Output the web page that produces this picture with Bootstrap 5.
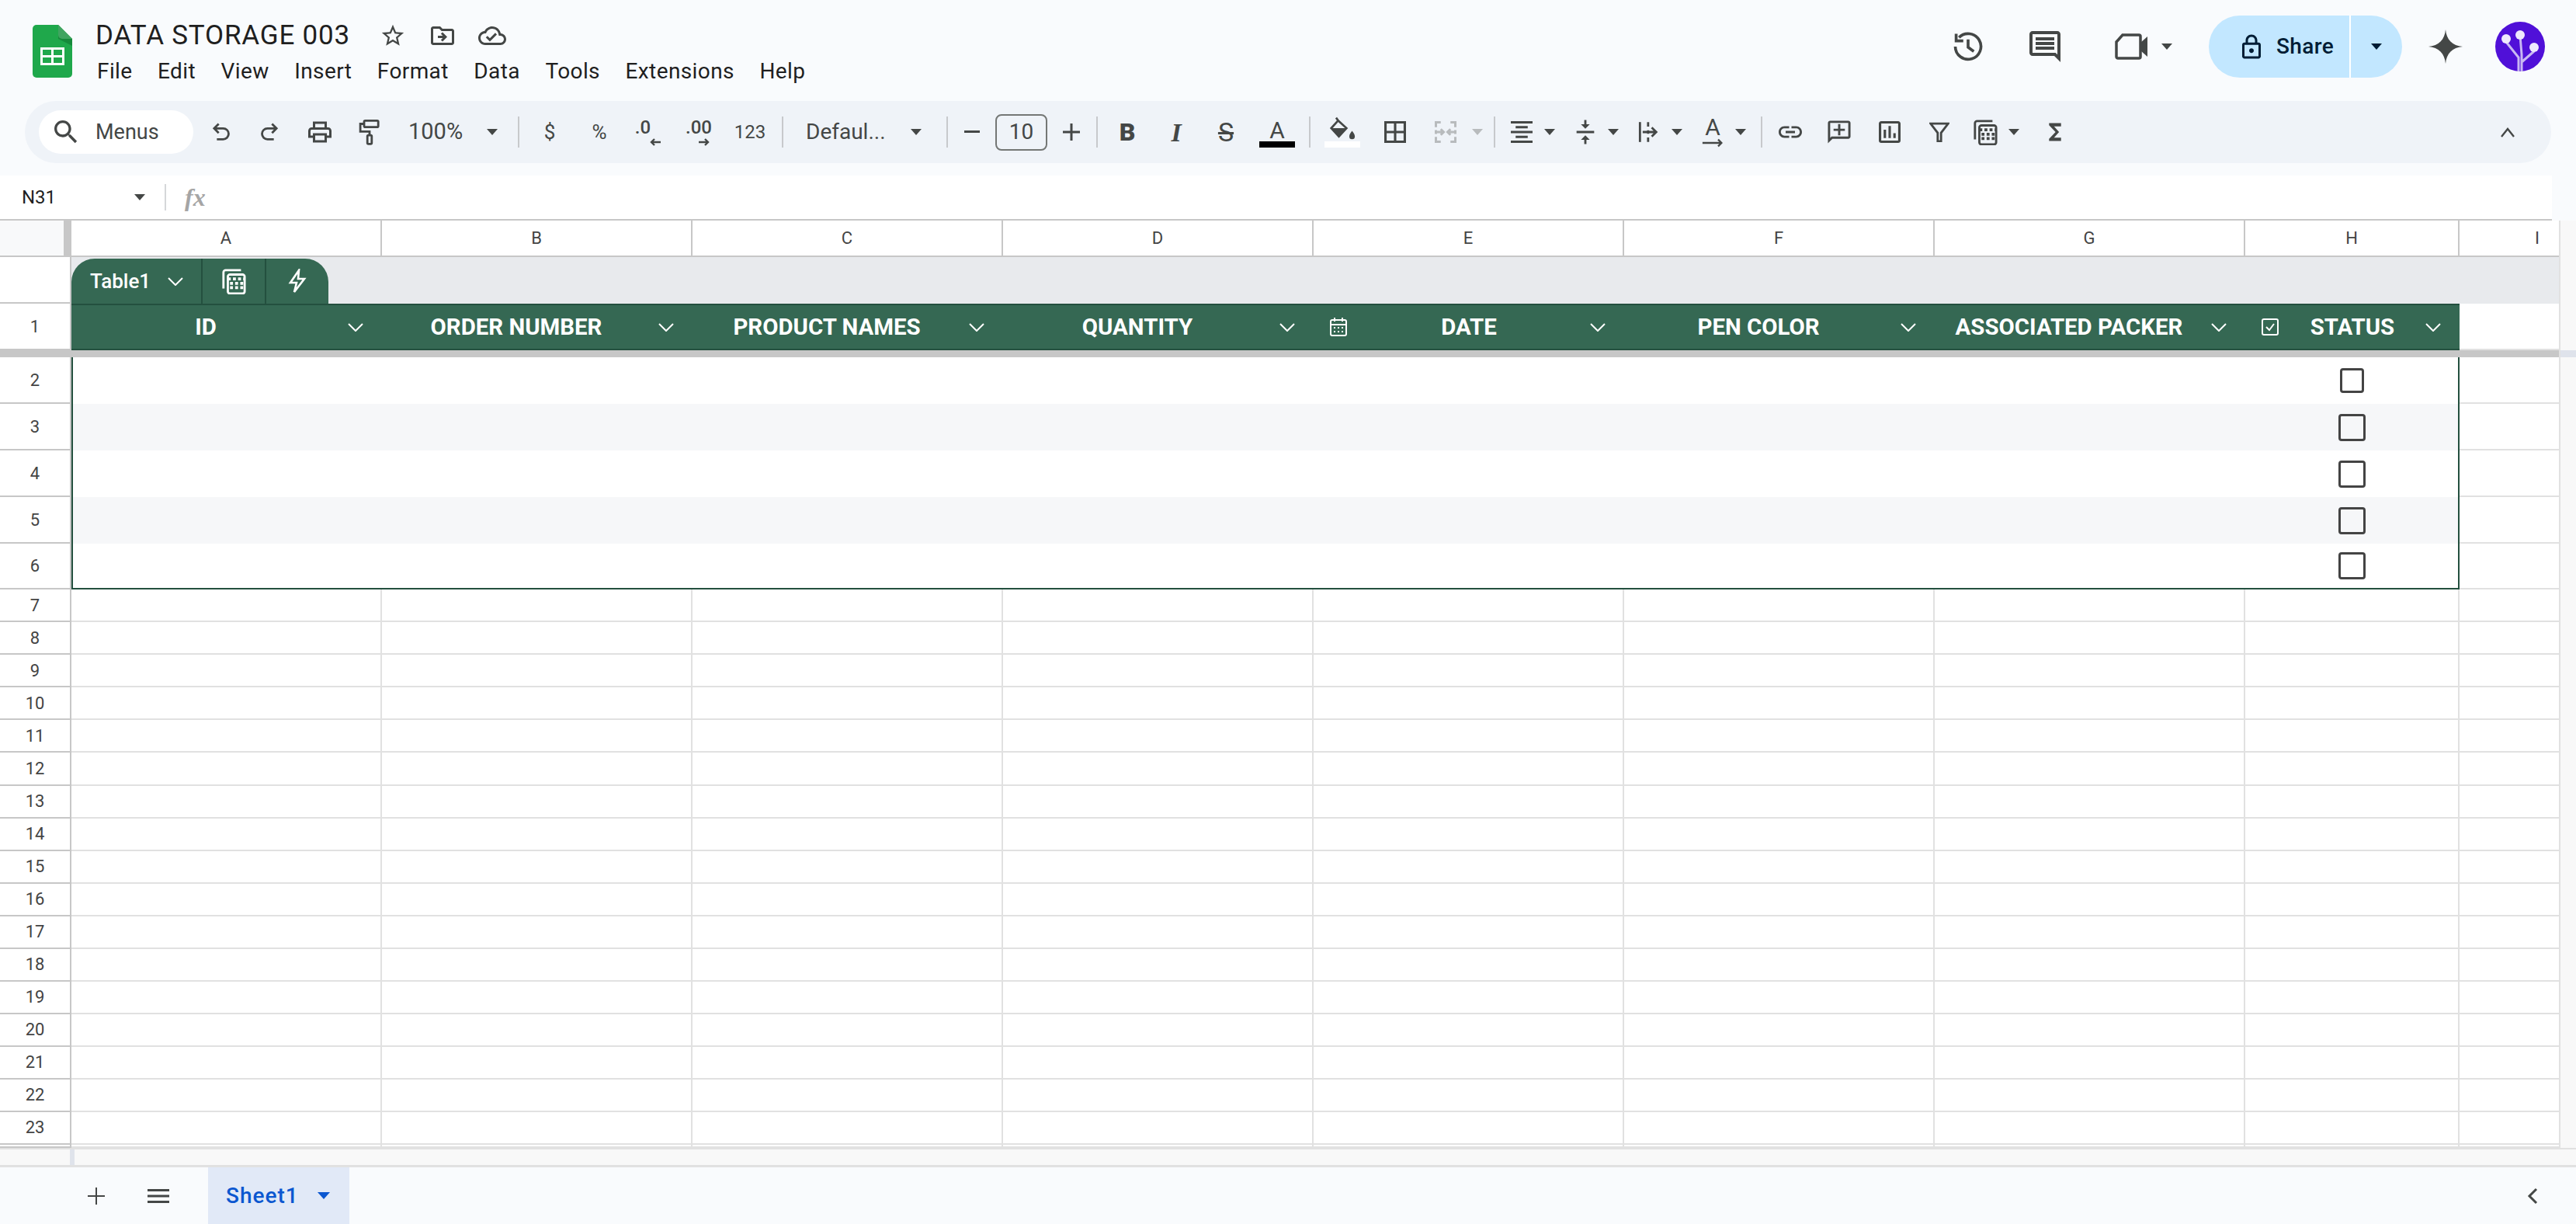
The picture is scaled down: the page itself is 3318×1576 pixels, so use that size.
<!DOCTYPE html>
<html lang="en">
<head>
<meta charset="utf-8">
<title>DATA STORAGE 003</title>
<link rel="stylesheet" href="https://cdn.jsdelivr.net/npm/bootstrap@5.3.0/dist/css/bootstrap.min.css">
<style>
html,body{height:100%}
body{width:3318px;height:1576px;overflow:hidden;background:#f9fbfd;font-family:Roboto,"Liberation Sans",sans-serif;color:#1f1f1f}
svg{display:block;flex:none}
.ic{fill:#444746}
.st{fill:none;stroke:#444746;stroke-width:2}
.tbar{height:130px}
.logo-box{margin:32px 0 0 42px;width:51px;height:68px}
.tcol{margin-left:30px}
.ttl-row{height:47px;margin-top:22px}
.ttl{font-size:35px;line-height:47px;letter-spacing:.8px;margin-right:23px;color:#1f1f1f}
.ttl-ic{width:64px}
.menu-row{gap:32.5px;font-size:28px;line-height:40px;letter-spacing:.4px;margin-top:3px;margin-left:2px}
.right-g{margin:20px 40px 0 0;height:80px}
.r-ic{width:64px}
.g-com{margin-left:35px}
.g-vid{margin-left:58px}
.g-shr{margin-left:47px}
.g-spk{margin-left:34px}
.g-av{margin-left:42px}
.sharebtn{width:249px;height:80px;background:#c2e7ff;border-radius:40px;color:#001d35;overflow:hidden}
.share-l{width:181px;padding-left:43px;gap:20px;font-size:28px;font-weight:500;letter-spacing:.4px}
.share-d{width:2px;height:80px;background:#fff}
.share-r{width:66px;padding-right:0}
.tri{width:0;height:0;border-left:7px solid transparent;border-right:7px solid transparent;border-top:8px solid #444746;flex:none}
.tri-navy{border-top-color:#001d35}
.tri-dis{border-top-color:#b8bbbd}
.tri-blue{border-top-color:#0b57d0;border-left-width:8px;border-right-width:8px;border-top-width:9px}
.tools{height:80px;margin:0 32px;background:#eff3f8;border-radius:40px;padding-left:18px;width:3254px}
.pill{width:199px;height:56px;background:#fff;border-radius:28px;padding-left:20px;gap:23px;font-size:27px;color:#444746;margin-right:3px}
.tw{height:80px;display:flex;align-items:center;justify-content:center;flex:none;color:#444746}
.w48{width:48px}.w50{width:50px}.w58{width:58px}.w62{width:62px}.w64{width:64px}.w66{width:66px}.w68{width:68px}.w74{width:74px}
.tsep{width:2px;height:40px;background:#c7c9cc;margin:0 7px;flex:none}
.tzoom{width:152px;padding-left:18px;padding-right:19px;justify-content:space-between;font-size:29px}
.tfont{width:196px;padding-left:22px;padding-right:25px;justify-content:space-between;font-size:28px}
.tsize{width:67px;height:47px;border:2px solid #747775;border-radius:8px;font-size:28px;margin:0 6px;color:#444746}
.tsym{font-size:26px}
.t123{font-size:24px}
.tdec{font-size:24px;line-height:20px;font-weight:500;text-align:center;padding-top:2px}
.dec-a{margin-right:16px}
.dec-b{margin-left:16px;margin-top:4px}
.dec-c{margin-left:14px;margin-top:4px}
.tb-b{font-size:32px;font-weight:900}
.tb-i{font-size:34px;font-family:"Liberation Serif",serif;font-style:italic;font-weight:700}
.tb-s{font-size:34px;text-decoration:line-through}
.tcolor{flex-direction:column;justify-content:flex-start;padding-top:24px}
.tb-a{font-size:30px;line-height:28px}
.bar-k{width:46px;height:8px;background:#000}
.bar-w{width:46px;height:8px;background:#fff;margin-top:2px}
.tdrop{width:82px;padding-left:7px;justify-content:flex-start}
.ibox{width:40px;display:flex;justify-content:center;flex:none}
.tdrop .tri{margin-left:9px}
.tmerge{width:86px;padding-left:11px;justify-content:flex-start}
.tmerge .tri{margin-left:14px}
.tfunc{width:79px;padding-left:6px;justify-content:flex-start}
.tfunc .tri{margin-left:10px}
.tup{width:64px;margin-right:24px}
.fbar{height:58px;margin-top:16px;width:3287px;background:#fff;border-bottom:2px solid #c7c7c7}
.nbox{width:212px;padding-left:28px;padding-right:25px;font-size:24px;color:#1f1f1f}
.fsep{width:2px;height:34px;background:#d5d7d9}
.fxt{font-family:"Liberation Serif",serif;font-style:italic;font-size:32px;color:#a5a5a5;margin-left:24px;font-weight:700}
.sheet-wrap{height:1194px;overflow:hidden;background:#fff}
.gridt{table-layout:fixed;width:3296px;border-collapse:separate;border-spacing:0;flex:none}
.c-r{width:92px}.c-w{width:400px}.c-h{width:276px}.c-i{width:128px}
.gridt td,.gridt th{padding:0;font-weight:400;vertical-align:middle}
.col-r{height:47px;font-size:22px;color:#444;text-align:center;border-right:2px solid #c7c7c7;border-bottom:2px solid #c7c7c7;background:#fff}
.gridt th.col-i{border-right:0;padding-left:72px}
.corner{background:#f8f9fa;border-right:10px solid #c7c7c7}
.rh{font-size:22px;color:#444;text-align:center;border-right:2px solid #c7c7c7;border-bottom:2px solid #c7c7c7;background:#fff}
.h60{height:60px}.h59{height:59px}.h42{height:42px}.h4{height:4px}.h9{height:9px}
.zone{background:#e8eaed;vertical-align:bottom!important}
.chip{width:331px;height:58px;background:#356853;border-radius:30px 30px 0 0;color:#fff;overflow:hidden;margin-top:2px}
.chip-a{width:167px;padding-left:24px;gap:22px;font-size:26px;font-weight:500}
.chip-s{width:2px;background:#24503f;height:58px}
.chip-b{width:80px}
.hd{height:60px;background:#356853;border-top:2px solid #24503f;border-bottom:2px solid #24503f;color:#fff;font-size:29.4px;font-weight:700!important}
.hc{height:56px}
.hc-t{flex:1;text-align:center;white-space:nowrap}
.hc-r{width:54px;padding-left:10px;flex:none}
.hc-l{width:54px;padding-left:21px;flex:none}
.freeze{height:9px;background:#c7c7c7;line-height:0;font-size:0}
.ce{border-right:2px solid #e1e1e1;border-bottom:2px solid #e1e1e1;background:#fff}
.ce-last{border-bottom:2px solid #e1e1e1;border-right:0;background:#fff}
.tb-l{border-left:2px solid #24503f}
.tb-rr{border-right:2px solid #24503f}
.tb-bb{border-bottom:2px solid #24503f}
.band{background:#f6f7f9}
.plain{background:#fff}
.ck{text-align:center}
.sk-check.form-check-input{display:block;margin:0 auto;background-color:transparent;border:3px solid #444;border-radius:4px;width:35px;height:35px}
.sk-small.form-check-input{width:31px;height:32px}
.vscroll{width:22px;background:#f8f8f8;border-left:2px solid #e1e1e1}
.v-freeze{height:9px;margin-top:167px;background:#dfe3eb}
.hscroll{height:25px;background:#f8f8f8;border-top:2px solid #e1e1e1;border-bottom:3px solid #e1e1e1}
.hs-stub{width:6px;margin-left:90px;background:#dfe3eb}
.btm{height:73px}
.b-s{width:48px;height:73px}
.b-add{margin-left:100px}
.b-all{margin-left:32px}
.stab{width:182px;height:73px;margin-left:40px;background:#e1e9f7;color:#0b57d0;font-size:28px;font-weight:500;letter-spacing:1px;padding-left:23px;gap:24px}
.b-end{width:40px;height:73px;margin-right:36px}
</style>
</head>
<body class="d-flex flex-column">

<header class="tbar d-flex flex-none">
  <div class="logo-box flex-shrink-0">
    <svg width="51" height="68" viewBox="0 0 51 68"><path d="M5 0H33L51 18V63a5 5 0 0 1-5 5H5a5 5 0 0 1-5-5V5a5 5 0 0 1 5-5z" fill="#1fa84b"/><path d="M33 0L51 18V27L33 18z" fill="#168a3b"/><path d="M33 0V13a5 5 0 0 0 5 5H51z" fill="#8fd5a6" opacity=".35"/><path d="M10 29H41V52H10zM13 32v7h11v-7zm14 0v7h11v-7zM13 42v7h11v-7zm14 0v7h11v-7z" fill="#fff" fill-rule="evenodd"/></svg>
  </div>
  <div class="tcol">
    <div class="ttl-row d-flex align-items-center">
      <span class="ttl">DATA STORAGE 003</span>
      <span class="ttl-ic d-flex justify-content-center"><svg width="34" height="34" viewBox="0 0 24 24" class="ic"><path d="M22 9.24l-7.19-.62L12 2 9.19 8.63 2 9.24l5.46 4.73L5.82 21 12 17.27 18.18 21l-1.63-7.03L22 9.24zM12 15.4l-3.76 2.27 1-4.28-3.32-2.88 4.38-.38L12 6.1l1.71 4.04 4.38.38-3.32 2.88 1 4.28L12 15.4z"/></svg></span>
      <span class="ttl-ic d-flex justify-content-center"><svg width="36" height="36" viewBox="0 0 24 24" class="ic"><path d="M20 6h-8l-2-2H4c-1.1 0-2 .9-2 2v12c0 1.1.9 2 2 2h16c1.1 0 2-.9 2-2V8c0-1.1-.9-2-2-2zm0 12H4V6h5.17l2 2H20v10zM12.16 12l-1.59-1.59L12 9l4 4-4 4-1.41-1.41L12.16 14H8v-2z"/></svg></span>
      <span class="ttl-ic d-flex justify-content-center"><svg width="36" height="36" viewBox="0 0 24 24" class="ic"><path d="M19.35 10.04C18.67 6.59 15.64 4 12 4 9.11 4 6.6 5.64 5.35 8.04 2.34 8.36 0 10.91 0 14c0 3.31 2.69 6 6 6h13c2.76 0 5-2.24 5-5 0-2.64-2.05-4.78-4.65-4.96zM19 18H6c-2.21 0-4-1.79-4-4 0-2.05 1.53-3.76 3.56-3.97l1.07-.11.5-.95C8.08 7.14 9.94 6 12 6c2.62 0 4.88 1.86 5.39 4.43l.3 1.5 1.53.11c1.56.1 2.78 1.41 2.78 2.96 0 1.65-1.35 3-3 3zm-9-3.82l-2.09-2.09L6.5 13.5 10 17l6.01-6.01-1.41-1.41z"/></svg></span>
    </div>
    <nav class="menu-row d-flex"><span>File</span><span>Edit</span><span>View</span><span>Insert</span><span>Format</span><span>Data</span><span>Tools</span><span>Extensions</span><span>Help</span></nav>
  </div>
  <div class="right-g ms-auto d-flex align-items-center">
    <span class="d-flex justify-content-center r-ic"><svg width="44" height="44" viewBox="0 0 24 24" class="st"><path d="M5.6 5.6A9 9 0 1 1 3 12"/><path d="M3.6 3v5h5"/><path d="M12 7v5.4l4 3"/></svg></span>
    <span class="d-flex justify-content-center g-com r-ic"><svg width="48" height="48" viewBox="0 0 24 24" class="ic"><path d="M21.99 4c0-1.1-.89-2-1.99-2H4c-1.1 0-2 .9-2 2v12c0 1.1.9 2 2 2h14l4 4-.01-18zM20 4v13.17L18.83 16H4V4h16zM6 12h12v2H6zm0-3h12v2H6zm0-3h12v2H6z"/></svg></span>
    <span class="d-flex align-items-center g-vid"><svg width="44" height="34" viewBox="0 0 44 34"><path d="M10 2h21a2 2 0 0 1 2 2v26a2 2 0 0 1-2 2H4a2 2 0 0 1-2-2V11z" fill="none" stroke="#444746" stroke-width="3.5"/><path d="M33 12l9-8v26l-9-8z" fill="#444746"/></svg><span class="tri ms-3"></span></span>
    <div class="sharebtn d-flex align-items-center g-shr">
      <span class="share-l d-flex align-items-center"><svg width="24" height="34" viewBox="4 0 16 23" preserveAspectRatio="none"><path fill="#001d35" d="M18 8h-1V6c0-2.76-2.24-5-5-5S7 3.24 7 6v2H6c-1.1 0-2 .9-2 2v10c0 1.1.9 2 2 2h12c1.1 0 2-.9 2-2V10c0-1.1-.9-2-2-2zM9 6c0-1.66 1.34-3 3-3s3 1.34 3 3v2H9V6zm9 14H6V10h12v10zm-6-3c1.1 0 2-.9 2-2s-.9-2-2-2-2 .9-2 2 .9 2 2 2z"/></svg>Share</span>
      <span class="share-d"></span>
      <span class="share-r d-flex justify-content-center"><span class="tri tri-navy"></span></span>
    </div>
    <span class="g-spk"><svg width="44" height="44" viewBox="2 2 20 20" class="ic"><path d="M12 2C12.5 8 16 11.5 22 12 16 12.5 12.5 16 12 22 11.5 16 8 12.5 2 12 8 11.5 11.5 8 12 2z"/></svg></span>
    <span class="g-av"><svg width="64" height="64" viewBox="0 0 64 64"><circle cx="32" cy="32" r="32" fill="#5010d8"/><path d="M30 64V46L14 26M34 64V42L32 18M34 52L50 38" fill="none" stroke="#c9b8f3" stroke-width="3"/><circle cx="14" cy="22" r="6" fill="#efe9fd"/><circle cx="32" cy="17" r="6" fill="#efe9fd"/><circle cx="50" cy="33" r="6" fill="#efe9fd"/></svg></span>
  </div>
</header>

<div class="tools d-flex align-items-center flex-none">
  <div class="pill d-flex align-items-center flex-none"><svg width="30" height="30" viewBox="3 3 18 18" class="ic"><path d="M15.5 14h-.79l-.28-.27C15.41 12.59 16 11.11 16 9.5 16 5.91 13.09 3 9.5 3S3 5.91 3 9.5 5.91 16 9.5 16c1.61 0 3.09-.59 4.23-1.57l.27.28v.79l5 4.99L20.49 19l-4.99-5zm-6 0C7.01 14 5 11.99 5 9.5S7.01 5 9.5 5 14 7.01 14 9.5 11.99 14 9.5 14z"/></svg><span>Menus</span></div>
  <span class="tw w64"><svg width="28" height="28" viewBox="0 0 24 24" class="st"><path stroke-width="2.4" d="M10 3L5 8l5 5M5 8h10a6 6 0 0 1 0 12H8"/></svg></span>
  <span class="tw w64"><svg width="28" height="28" viewBox="0 0 24 24" class="st"><path stroke-width="2.4" d="M14 3l5 5-5 5M19 8H9a6 6 0 0 0 0 12h7"/></svg></span>
  <span class="tw w64"><svg width="36" height="36" viewBox="0 0 24 24" class="ic"><path d="M19 8h-1V3H6v5H5c-1.66 0-3 1.34-3 3v6h4v4h12v-4h4v-6c0-1.66-1.34-3-3-3zM8 5h8v3H8V5zm8 12v2H8v-4h8v2zm2-2v-2H6v2H4v-4c0-.55.45-1 1-1h14c.55 0 1 .45 1 1v4h-2z"/></svg></span>
  <span class="tw w64"><svg width="28" height="34" viewBox="0 0 20 24" class="st"><rect x="5" y="1.5" width="13" height="6" rx="1"/><path d="M5 4.5H1.5v7H10V15"/><rect x="8" y="15" width="4" height="8" rx="1"/></svg></span>
  <span class="tw tzoom"><span>100%</span><span class="tri"></span></span>
  <span class="tsep"></span>
  <span class="tw w64 tsym">$</span>
  <span class="tw w64 tsym">%</span>
  <span class="tw w64 flex-column tdec"><span class="dec-a">.0</span><svg width="16" height="10" viewBox="0 0 16 10" class="st dec-b"><path stroke-width="2.4" d="M15 5H3M7 1L3 5l4 4"/></svg></span>
  <span class="tw w64 flex-column tdec"><span>.00</span><svg width="16" height="10" viewBox="0 0 16 10" class="st dec-c"><path stroke-width="2.4" d="M1 5h12M9 1l4 4-4 4"/></svg></span>
  <span class="tw w68 t123">123</span>
  <span class="tsep"></span>
  <span class="tw tfont"><span>Defaul...</span><span class="tri"></span></span>
  <span class="tsep"></span>
  <span class="tw w48"><svg width="20" height="4" viewBox="0 0 20 4" class="ic"><rect width="20" height="3"/></svg></span>
  <span class="tsize d-flex align-items-center justify-content-center flex-none">10</span>
  <span class="tw w50"><svg width="22" height="22" viewBox="0 0 22 22" class="ic"><path d="M0 9.5h22v3H0zM9.5 0h3v22h-3z"/></svg></span>
  <span class="tsep"></span>
  <span class="tw w62 tb-b">B</span>
  <span class="tw w64 tb-i">I</span>
  <span class="tw w64 tb-s">S</span>
  <span class="tw w68 tcolor"><span class="tb-a">A</span><span class="bar-k"></span></span>
  <span class="tsep"></span>
  <span class="tw w68"><span class="d-flex flex-column align-items-center"><svg width="34" height="30" viewBox="0 0 38 32" class="ic"><path d="M10 1l3 4-10 11 11 12 11-12L13 5" fill="none" stroke="#444746" stroke-width="3"/><path d="M3 16h22L14 28z"/><path d="M33 20c2 3 4 5 4 8a4 4 0 0 1-8 0c0-3 2-5 4-8z"/></svg><span class="bar-w"></span></span></span>
  <span class="tw w68"><svg width="28" height="28" viewBox="3 3 18 18" class="ic"><path d="M3 3v18h18V3H3zm8 16H5v-6h6v6zm0-8H5V5h6v6zm8 8h-6v-6h6v6zm0-8h-6V5h6v6z"/></svg></span>
  <span class="tw tmerge"><span class="ibox"><svg width="30" height="30" viewBox="0 0 24 24" fill="none" stroke="#b8bbbd" stroke-width="2.4"><path d="M7 2H2v5M17 2h5v5M7 22H2v-5M17 22h5v-5M2 10v4M22 10v4"/><path d="M3 12h7M7 9l3 3-3 3M21 12h-7M17 9l-3 3 3 3"/></svg></span><span class="tri tri-dis"></span></span>
  <span class="tsep"></span>
  <span class="tw tdrop"><span class="ibox"><svg width="28" height="28" viewBox="3 3 18 18" class="ic"><path d="M7 15v2h10v-2H7zm-4 6h18v-2H3v2zm0-8h18v-2H3v2zm4-6v2h10V7H7zM3 3v2h18V3H3z"/></svg></span><span class="tri"></span></span>
  <span class="tw tdrop"><span class="ibox"><svg width="34" height="34" viewBox="0 0 24 24" class="ic"><path d="M8 19h3v4h2v-4h3l-4-4-4 4zm8-14h-3V1h-2v4H8l4 4 4-4zM4 11v2h16v-2H4z"/></svg></span><span class="tri"></span></span>
  <span class="tw tdrop"><span class="ibox"><svg width="28" height="30" viewBox="0 0 24 24" fill="none" stroke="#444746" stroke-width="2.4"><path d="M2 1v22"/><path d="M11 1v5M11 10v4M11 18v5"/><path d="M5 12h15M15 7l5 5-5 5"/></svg></span><span class="tri"></span></span>
  <span class="tw tdrop"><span class="ibox d-flex flex-column align-items-center"><span class="tb-a">A</span><svg width="28" height="12" viewBox="0 0 32 12" class="st"><path stroke-width="2.6" d="M1 6h28M24 1l5 5-5 5"/></svg></span><span class="tri"></span></span>
  <span class="tsep"></span>
  <span class="tw w58"><svg width="36" height="36" viewBox="0 0 24 24" class="ic"><path d="M3.9 12c0-1.71 1.39-3.1 3.1-3.1h4V7H7c-2.76 0-5 2.24-5 5s2.24 5 5 5h4v-1.9H7c-1.71 0-3.1-1.39-3.1-3.1zM8 13h8v-2H8v2zm9-6h-4v1.9h4c1.71 0 3.1 1.39 3.1 3.1s-1.39 3.1-3.1 3.1h-4V17h4c2.76 0 5-2.24 5-5s-2.24-5-5-5z"/></svg></span>
  <span class="tw w68"><svg width="32" height="32" viewBox="1 1 22 22" class="ic"><path d="M20 2H4c-1.1 0-2 .9-2 2v18l4-4h14c1.1 0 2-.9 2-2V4c0-1.1-.9-2-2-2zm0 14H5.17L4 17.17V4h16v12z"/><path d="M13 5h-2v4H7v2h4v4h2v-4h4V9h-4z"/></svg></span>
  <span class="tw w62"><svg width="28" height="28" viewBox="3 3 18 18" class="ic"><path d="M9 17H7v-7h2v7zm4 0h-2V7h2v10zm4 0h-2v-4h2v4zm2 2H5V5h14v14zm0-16H5c-1.1 0-2 .9-2 2v14c0 1.1.9 2 2 2h14c1.1 0 2-.9 2-2V5c0-1.1-.9-2-2-2z"/></svg></span>
  <span class="tw w66"><svg width="26" height="26" viewBox="0 0 24 24" fill="none" stroke="#444746" stroke-width="2.6"><path d="M1.5 2h21L14 13v10h-4V13z"/></svg></span>
  <span class="tw tfunc"><span class="ibox"><svg width="32" height="34" viewBox="0 0 34 36" class="st"><path stroke-width="3" d="M3 28V6a3 3 0 0 1 3-3h21"/><rect x="9" y="9" width="23" height="26" rx="3" stroke-width="3"/><path d="M9 15h23M12 21h18M12 27h18" stroke-dasharray="4 3" stroke-width="4"/></svg></span><span class="tri"></span></span>
  <span class="tw w74"><svg width="18" height="26" viewBox="5 3 14 18" preserveAspectRatio="none" class="ic"><path d="M18 4H6v2l6.5 6L6 18v2h12v-3h-7l5-5-5-5h7z"/></svg></span>
  <span class="tw tup ms-auto"><svg width="20" height="13" viewBox="0 0 20 13" class="st"><path stroke-width="2.4" d="M2 12l8-10 8 10"/></svg></span>
</div>

<div class="fbar d-flex align-items-center flex-none">
  <div class="nbox d-flex align-items-center justify-content-between"><span>N31</span><span class="tri"></span></div>
  <span class="fsep"></span>
  <span class="fxt">fx</span>
</div>

<div class="sheet-wrap d-flex flex-none">
  <table class="gridt">
    <colgroup><col class="c-r"><col class="c-w"><col class="c-w"><col class="c-w"><col class="c-w"><col class="c-w"><col class="c-w"><col class="c-w"><col class="c-h"><col class="c-i"></colgroup>
    <thead><tr>
      <th class="col-r corner"></th><th class="col-r">A</th><th class="col-r">B</th><th class="col-r">C</th><th class="col-r">D</th><th class="col-r">E</th><th class="col-r">F</th><th class="col-r">G</th><th class="col-r">H</th><th class="col-r col-i">I</th>
    </tr></thead>
    <tbody>
      <tr><td class="rh h60"></td><td class="zone h60" colspan="9"><div class="chip d-flex">
        <span class="chip-a d-flex align-items-center"><span>Table1</span><svg width="20" height="11" viewBox="0 0 20 11" fill="none" stroke="#fff" stroke-width="2"><path d="M1 1l9 9 9-9"/></svg></span>
        <span class="chip-s"></span>
        <span class="chip-b d-flex align-items-center justify-content-center"><svg width="32" height="34" viewBox="0 0 34 36" fill="none" stroke="#fff"><path stroke-width="3" d="M3 28V6a3 3 0 0 1 3-3h21"/><rect x="9" y="9" width="23" height="26" rx="3" stroke-width="3"/><path d="M9 15h23M12 21h18M12 27h18" stroke-dasharray="4 3" stroke-width="4"/></svg></span>
        <span class="chip-s"></span>
        <span class="chip-b d-flex align-items-center justify-content-center"><svg width="24" height="32" viewBox="0 0 24 32" fill="none" stroke="#fff" stroke-width="2.6"><path d="M14 2L3 18h8l-3 12 13-17h-8z"/></svg></span>
      </div></td></tr>
      <tr>
        <td class="rh h60">1</td>
        <th class="hd"><div class="hc d-flex align-items-center"><span class="hc-t">ID</span><span class="hc-r"><svg width="20" height="11" viewBox="0 0 20 11" fill="none" stroke="#fff" stroke-width="2"><path d="M1 1l9 9 9-9"/></svg></span></div></th>
        <th class="hd"><div class="hc d-flex align-items-center"><span class="hc-t">ORDER NUMBER</span><span class="hc-r"><svg width="20" height="11" viewBox="0 0 20 11" fill="none" stroke="#fff" stroke-width="2"><path d="M1 1l9 9 9-9"/></svg></span></div></th>
        <th class="hd"><div class="hc d-flex align-items-center"><span class="hc-t">PRODUCT NAMES</span><span class="hc-r"><svg width="20" height="11" viewBox="0 0 20 11" fill="none" stroke="#fff" stroke-width="2"><path d="M1 1l9 9 9-9"/></svg></span></div></th>
        <th class="hd"><div class="hc d-flex align-items-center"><span class="hc-t">QUANTITY</span><span class="hc-r"><svg width="20" height="11" viewBox="0 0 20 11" fill="none" stroke="#fff" stroke-width="2"><path d="M1 1l9 9 9-9"/></svg></span></div></th>
        <th class="hd"><div class="hc d-flex align-items-center"><span class="hc-l"><svg width="22" height="24" viewBox="0 0 22 24" fill="none" stroke="#fff" stroke-width="2"><rect x="1" y="3" width="20" height="20" rx="2"/><path d="M1 9h20M6 0v5M16 0v5"/><path d="M5 13h12M5 18h12" stroke-dasharray="2 3"/></svg></span><span class="hc-t">DATE</span><span class="hc-r"><svg width="20" height="11" viewBox="0 0 20 11" fill="none" stroke="#fff" stroke-width="2"><path d="M1 1l9 9 9-9"/></svg></span></div></th>
        <th class="hd"><div class="hc d-flex align-items-center"><span class="hc-t">PEN COLOR</span><span class="hc-r"><svg width="20" height="11" viewBox="0 0 20 11" fill="none" stroke="#fff" stroke-width="2"><path d="M1 1l9 9 9-9"/></svg></span></div></th>
        <th class="hd"><div class="hc d-flex align-items-center"><span class="hc-t">ASSOCIATED PACKER</span><span class="hc-r"><svg width="20" height="11" viewBox="0 0 20 11" fill="none" stroke="#fff" stroke-width="2"><path d="M1 1l9 9 9-9"/></svg></span></div></th>
        <th class="hd"><div class="hc d-flex align-items-center"><span class="hc-l"><svg width="22" height="22" viewBox="0 0 22 22" fill="none" stroke="#fff" stroke-width="2"><rect x="1" y="1" width="20" height="20" rx="2"/><path d="M6 11l4 4 6-8"/></svg></span><span class="hc-t">STATUS</span><span class="hc-r"><svg width="20" height="11" viewBox="0 0 20 11" fill="none" stroke="#fff" stroke-width="2"><path d="M1 1l9 9 9-9"/></svg></span></div></th>
        <td class="ce-last h60"></td>
      </tr>
      <tr><td class="freeze" colspan="10"></td></tr>
      <tr><td class="rh h60">2</td><td class="plain tb-l" colspan="7"></td><td class="plain tb-rr ck"><input class="form-check-input sk-check sk-small" type="checkbox" aria-label="Status 2"></td><td class="ce-last"></td></tr>
      <tr><td class="rh h60">3</td><td class="band tb-l" colspan="7"></td><td class="band tb-rr ck"><input class="form-check-input sk-check" type="checkbox" aria-label="Status 3"></td><td class="ce-last"></td></tr>
      <tr><td class="rh h60">4</td><td class="plain tb-l" colspan="7"></td><td class="plain tb-rr ck"><input class="form-check-input sk-check" type="checkbox" aria-label="Status 4"></td><td class="ce-last"></td></tr>
      <tr><td class="rh h60">5</td><td class="band tb-l" colspan="7"></td><td class="band tb-rr ck"><input class="form-check-input sk-check" type="checkbox" aria-label="Status 5"></td><td class="ce-last"></td></tr>
      <tr><td class="rh h59">6</td><td class="plain tb-l tb-bb" colspan="7"></td><td class="plain tb-rr tb-bb ck"><input class="form-check-input sk-check" type="checkbox" aria-label="Status 6"></td><td class="ce-last"></td></tr>
      <tr><td class="rh h42">7</td><td class="ce"></td><td class="ce"></td><td class="ce"></td><td class="ce"></td><td class="ce"></td><td class="ce"></td><td class="ce"></td><td class="ce"></td><td class="ce-last"></td></tr>
      <tr><td class="rh h42">8</td><td class="ce"></td><td class="ce"></td><td class="ce"></td><td class="ce"></td><td class="ce"></td><td class="ce"></td><td class="ce"></td><td class="ce"></td><td class="ce-last"></td></tr>
      <tr><td class="rh h42">9</td><td class="ce"></td><td class="ce"></td><td class="ce"></td><td class="ce"></td><td class="ce"></td><td class="ce"></td><td class="ce"></td><td class="ce"></td><td class="ce-last"></td></tr>
      <tr><td class="rh h42">10</td><td class="ce"></td><td class="ce"></td><td class="ce"></td><td class="ce"></td><td class="ce"></td><td class="ce"></td><td class="ce"></td><td class="ce"></td><td class="ce-last"></td></tr>
      <tr><td class="rh h42">11</td><td class="ce"></td><td class="ce"></td><td class="ce"></td><td class="ce"></td><td class="ce"></td><td class="ce"></td><td class="ce"></td><td class="ce"></td><td class="ce-last"></td></tr>
      <tr><td class="rh h42">12</td><td class="ce"></td><td class="ce"></td><td class="ce"></td><td class="ce"></td><td class="ce"></td><td class="ce"></td><td class="ce"></td><td class="ce"></td><td class="ce-last"></td></tr>
      <tr><td class="rh h42">13</td><td class="ce"></td><td class="ce"></td><td class="ce"></td><td class="ce"></td><td class="ce"></td><td class="ce"></td><td class="ce"></td><td class="ce"></td><td class="ce-last"></td></tr>
      <tr><td class="rh h42">14</td><td class="ce"></td><td class="ce"></td><td class="ce"></td><td class="ce"></td><td class="ce"></td><td class="ce"></td><td class="ce"></td><td class="ce"></td><td class="ce-last"></td></tr>
      <tr><td class="rh h42">15</td><td class="ce"></td><td class="ce"></td><td class="ce"></td><td class="ce"></td><td class="ce"></td><td class="ce"></td><td class="ce"></td><td class="ce"></td><td class="ce-last"></td></tr>
      <tr><td class="rh h42">16</td><td class="ce"></td><td class="ce"></td><td class="ce"></td><td class="ce"></td><td class="ce"></td><td class="ce"></td><td class="ce"></td><td class="ce"></td><td class="ce-last"></td></tr>
      <tr><td class="rh h42">17</td><td class="ce"></td><td class="ce"></td><td class="ce"></td><td class="ce"></td><td class="ce"></td><td class="ce"></td><td class="ce"></td><td class="ce"></td><td class="ce-last"></td></tr>
      <tr><td class="rh h42">18</td><td class="ce"></td><td class="ce"></td><td class="ce"></td><td class="ce"></td><td class="ce"></td><td class="ce"></td><td class="ce"></td><td class="ce"></td><td class="ce-last"></td></tr>
      <tr><td class="rh h42">19</td><td class="ce"></td><td class="ce"></td><td class="ce"></td><td class="ce"></td><td class="ce"></td><td class="ce"></td><td class="ce"></td><td class="ce"></td><td class="ce-last"></td></tr>
      <tr><td class="rh h42">20</td><td class="ce"></td><td class="ce"></td><td class="ce"></td><td class="ce"></td><td class="ce"></td><td class="ce"></td><td class="ce"></td><td class="ce"></td><td class="ce-last"></td></tr>
      <tr><td class="rh h42">21</td><td class="ce"></td><td class="ce"></td><td class="ce"></td><td class="ce"></td><td class="ce"></td><td class="ce"></td><td class="ce"></td><td class="ce"></td><td class="ce-last"></td></tr>
      <tr><td class="rh h42">22</td><td class="ce"></td><td class="ce"></td><td class="ce"></td><td class="ce"></td><td class="ce"></td><td class="ce"></td><td class="ce"></td><td class="ce"></td><td class="ce-last"></td></tr>
      <tr><td class="rh h42">23</td><td class="ce"></td><td class="ce"></td><td class="ce"></td><td class="ce"></td><td class="ce"></td><td class="ce"></td><td class="ce"></td><td class="ce"></td><td class="ce-last"></td></tr>
      <tr><td class="rh h4"></td><td class="ce"></td><td class="ce"></td><td class="ce"></td><td class="ce"></td><td class="ce"></td><td class="ce"></td><td class="ce"></td><td class="ce"></td><td class="ce-last"></td></tr>
    </tbody>
  </table>
  <div class="vscroll flex-grow-1"><div class="v-freeze"></div></div>
</div>

<div class="hscroll d-flex flex-none"><span class="hs-stub"></span></div>

<footer class="btm d-flex align-items-center flex-none">
  <span class="b-s b-add d-flex align-items-center justify-content-center"><svg width="24" height="24" viewBox="0 0 24 24" class="ic"><path d="M11 1h2v22h-2zM1 11h22v2H1z"/></svg></span>
  <span class="b-s b-all d-flex align-items-center justify-content-center"><svg width="28" height="20" viewBox="0 0 28 20" class="ic"><path d="M0 1h28v3H0zM0 8.5h28v3H0zM0 16h28v3H0z"/></svg></span>
  <div class="stab d-flex align-items-center"><span>Sheet1</span><span class="tri tri-blue"></span></div>
  <span class="b-end ms-auto d-flex align-items-center justify-content-center"><svg width="14" height="22" viewBox="0 0 14 22" fill="none" stroke="#444746" stroke-width="3"><path d="M12 2L3 11l9 9"/></svg></span>
</footer>

<script src="https://cdn.jsdelivr.net/npm/bootstrap@5.3.0/dist/js/bootstrap.bundle.min.js"></script>
</body>
</html>
